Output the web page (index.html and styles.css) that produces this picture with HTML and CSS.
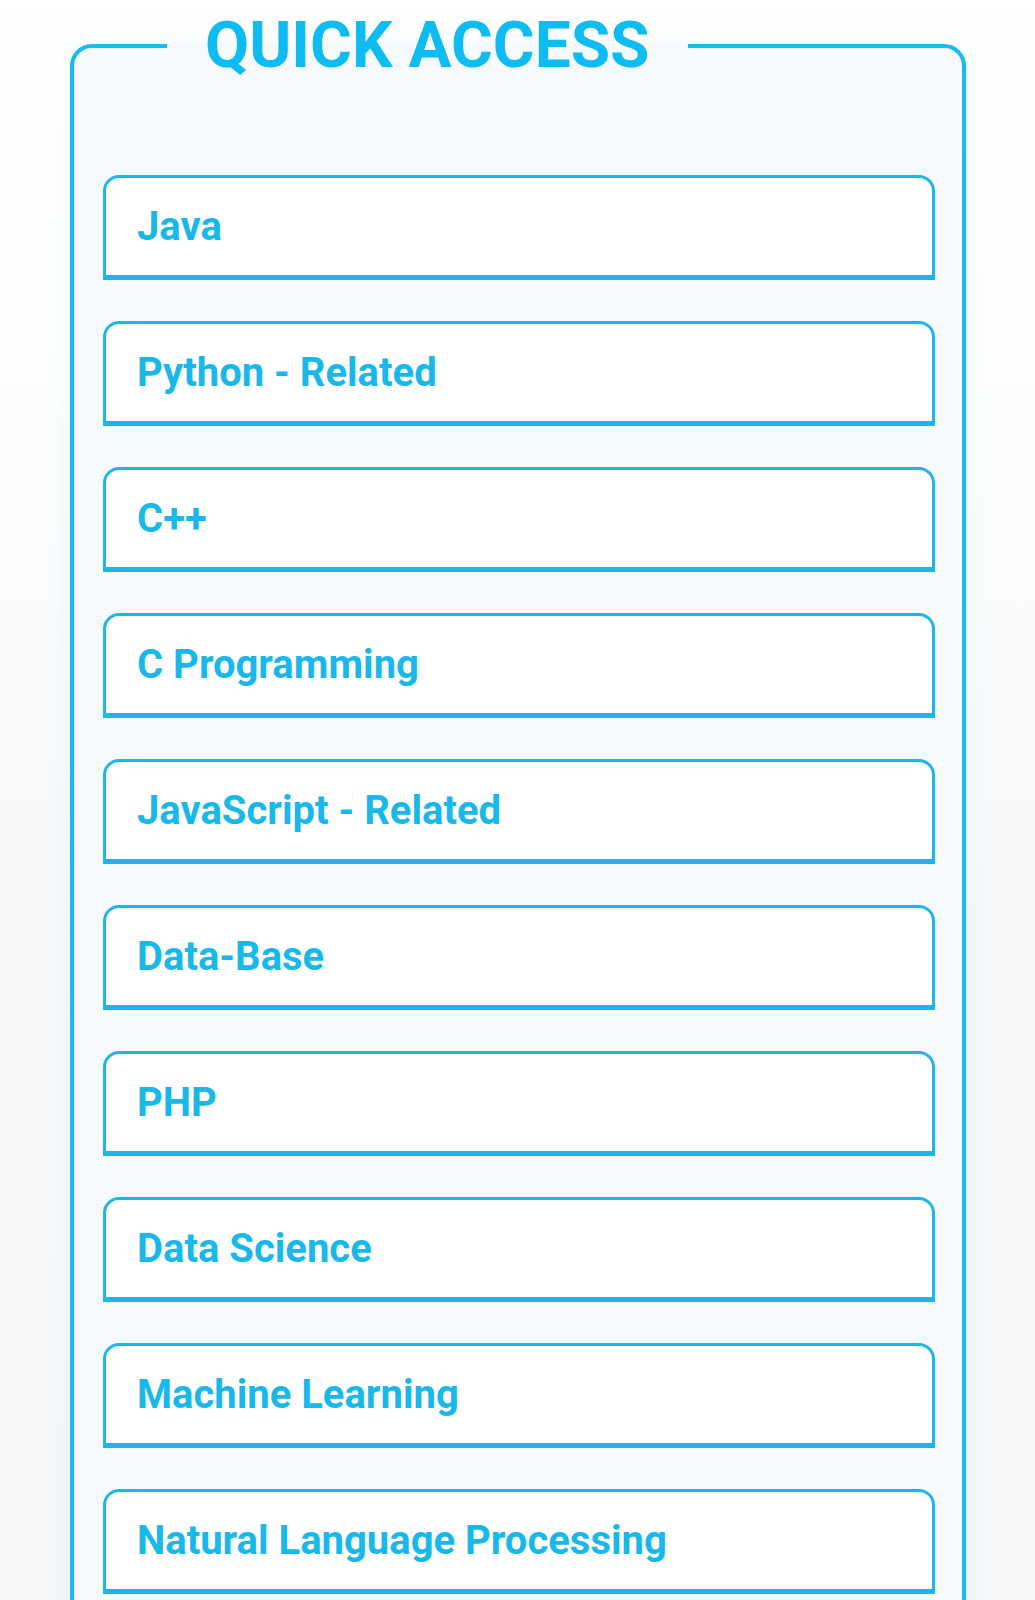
FILE: index.html
```html
<!DOCTYPE html>
<html lang="en">
<head>
<meta charset="utf-8">
<title>Quick Access</title>
<link rel="stylesheet" href="styles.css">
</head>
<body>
<fieldset class="quick">
  <legend class="quick-title">QUICK ACCESS</legend>
  <ul class="links">
    <li class="link">Java</li>
    <li class="link">Python - Related</li>
    <li class="link">C++</li>
    <li class="link">C Programming</li>
    <li class="link">JavaScript - Related</li>
    <li class="link">Data-Base</li>
    <li class="link">PHP</li>
    <li class="link">Data Science</li>
    <li class="link">Machine Learning</li>
    <li class="link">Natural Language Processing</li>
  </ul>
</fieldset>
</body>
</html>
```

FILE: styles.css
```css
html, body {
  margin: 0;
  padding: 0;
}
body {
  height: 1600px;
  overflow: hidden;
  background: linear-gradient(#ffffff 0px, #fdfefe 300px, #f6f8fa 900px, #f5f7f9 1600px);
  font-family: Roboto, "Liberation Sans", sans-serif;
  padding-top: 14px;
  box-sizing: border-box;
}
.quick {
  margin: 0 0 0 70px;
  width: 896px;
  box-sizing: border-box;
  border: 4px solid #17bbee;
  border-radius: 22px;
  background: #f6fafd;
  box-shadow: 0 0 24px rgba(20, 150, 210, 0.06);
  padding: 0 27px 200px 29px;
  min-width: 0;
}
.quick-title {
  margin-left: 64px;
  padding: 0 38px;
  font-size: 64px;
  line-height: 1;
  font-weight: 700;
  color: #0fbcf1;
}
.links {
  list-style: none;
  margin: 97px 0 0 0;
  padding: 0;
  display: flex;
  flex-direction: column;
  gap: 41px;
}
.link {
  height: 105px;
  box-sizing: border-box;
  border: 3px solid #1db6e9;
  border-bottom-width: 5px;
  border-radius: 16px 16px 0 0;
  background: #ffffff;
  display: flex;
  align-items: center;
  padding: 0 0 0 31px;
  font-size: 40px;
  font-weight: 700;
  color: #19b8ea;
}
```
